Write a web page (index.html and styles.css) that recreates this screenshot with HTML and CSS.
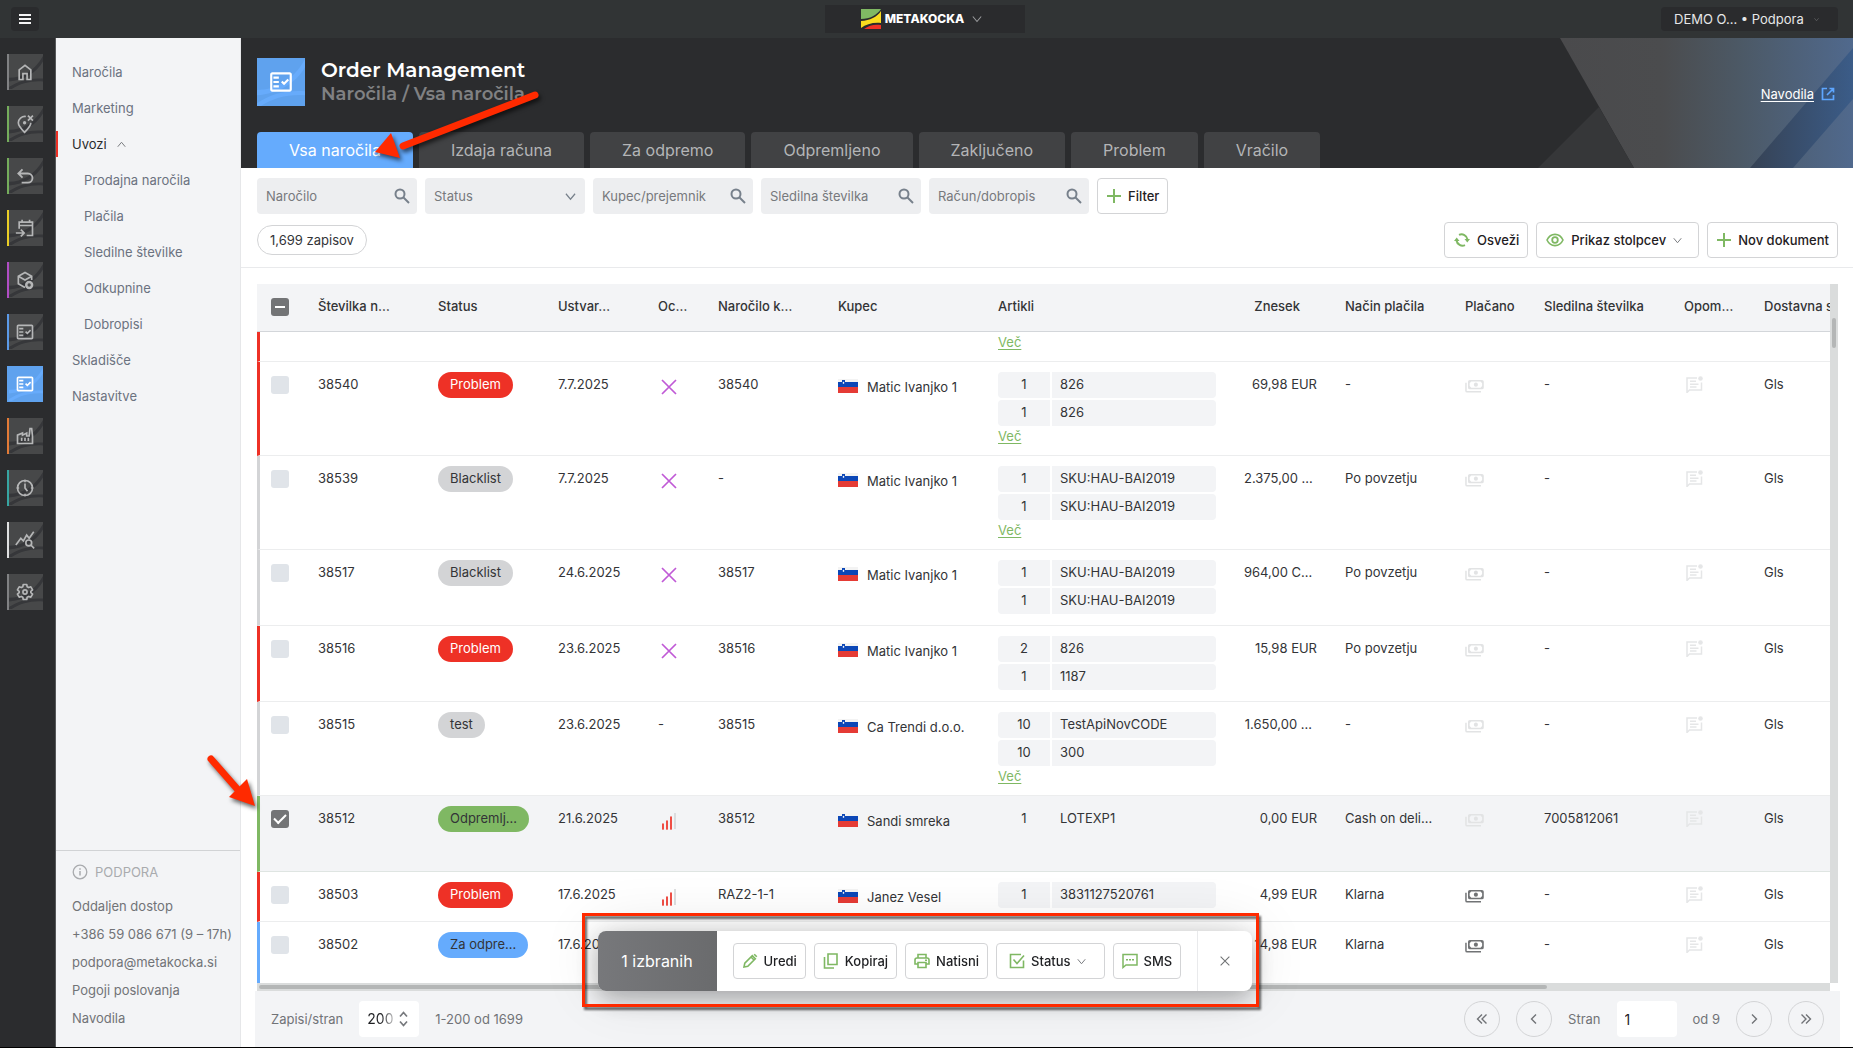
FILE: index.html
```html
<!DOCTYPE html>
<html lang="sl">
<head>
<meta charset="utf-8">
<title>Order Management</title>
<link rel="stylesheet" href="styles.css">
</head>
<body>
<svg class="sprite" aria-hidden="true">
  <symbol id="waves" viewBox="0 0 36 36"><path d="M0 24C14 24 27 17 36 1V7C29 19 16 27 0 28Z"/><path d="M0 34C10 27 22 24 36 25V28C24 27 12 30 3 36H0Z"/></symbol>
  <symbol id="i-home" viewBox="0 0 24 24"><path d="M5 21V9.500L12 4l7 5.500V21h-4.500v-7h-5v7z" fill="none" stroke="currentColor" stroke-width="2"/></symbol>
  <symbol id="i-pin" viewBox="0 0 24 24"><path d="M13 3C8 2.500 4 6 4 10.500c0 4 3.500 7.500 7.500 11.500 4-4 7.500-7.500 7.500-11.500" fill="none" stroke="currentColor" stroke-width="2"/><circle cx="11.500" cy="10.500" r="2"/><path d="M15.500 2l6 6m0-6l-6 6" stroke="currentColor" stroke-width="2"/></symbol>
  <symbol id="i-undo" viewBox="0 0 24 24"><path d="M8 20h7.500a5 5 0 0 0 0-11H5M9 4L4 9l5 5" fill="none" stroke="currentColor" stroke-width="2.200"/></symbol>
  <symbol id="i-cal" viewBox="0 0 24 24"><path d="M5 13V5h16v16h-7M5 9h16M8.500 2v4M17.500 2v4M1 18h9M7 14l4 4-4 4" fill="none" stroke="currentColor" stroke-width="2"/></symbol>
  <symbol id="i-box" viewBox="0 0 24 24"><path d="M12 21l-8-4.500V7.500L12 3l8 4.500V12M4 7.500l8 4.500 8-4.500" fill="none" stroke="currentColor" stroke-width="2"/><circle cx="17" cy="18" r="3.500" fill="none" stroke="currentColor" stroke-width="3"/></symbol>
  <symbol id="i-fact" viewBox="0 0 24 24"><path d="M20 3H4c-1.100 0-2 .9-2 2v14c0 1.100.9 2 2 2h16c1.100 0 2-.9 2-2V5c0-1.100-.9-2-2-2zm0 16H4V5h16z"/><path d="M19.410 10.420L17.990 9l-3.170 3.170-1.410-1.420L12 12.160 14.820 15zM5 7h5v2H5zM5 11h5v2H5zM5 15h5v2H5z"/></symbol>
  <symbol id="i-factory" viewBox="0 0 24 24"><path d="M3 21V11l6-2.500V11l5-2.500V12h3l1-9h2l1 9v9z" fill="none" stroke="currentColor" stroke-width="2"/><path d="M7 14h2v4H7zM11 14h2v4h-2zM15 14h2v4h-2z"/></symbol>
  <symbol id="i-clock" viewBox="0 0 24 24"><circle cx="12" cy="12" r="9" fill="none" stroke="currentColor" stroke-width="2"/><path d="M12 6.500V12l3 4M12 2v3M12 19v3M2 12h3M19 12h3" fill="none" stroke="currentColor" stroke-width="2"/></symbol>
  <symbol id="i-chart" viewBox="0 0 24 24"><path d="M1 18l6-8 3 3 4-7 3 4 5.500-8M19 18l4 4" fill="none" stroke="currentColor" stroke-width="2"/><circle cx="16.500" cy="15.500" r="3.500" fill="none" stroke="currentColor" stroke-width="2"/></symbol>
  <symbol id="i-gear" viewBox="0 0 24 24"><path d="M9.900 3h4.200l.5 2.700 1.800 1 2.600-.9 2.100 3.600-2.100 1.800v1.600l2.100 1.800-2.100 3.600-2.600-.9-1.800 1-.5 2.700H9.900l-.5-2.700-1.800-1-2.600.9-2.100-3.600L5 12.800v-1.600L2.900 9.400 5 5.800l2.600.9 1.800-1z" fill="none" stroke="currentColor" stroke-width="2" stroke-linejoin="round"/><circle cx="12" cy="12" r="2.500" fill="none" stroke="currentColor" stroke-width="2"/></symbol>
  <symbol id="i-down" viewBox="0 0 12 12"><path d="M1 3l5 6 5-6" fill="none" stroke="currentColor" stroke-width="1.300"/></symbol>
  <symbol id="i-up" viewBox="0 0 12 12"><path d="M1 9l5-6 5 6" fill="none" stroke="currentColor" stroke-width="1.300"/></symbol>
  <symbol id="i-search" viewBox="0 0 16 16"><circle cx="6" cy="6" r="4.500" fill="none" stroke="currentColor" stroke-width="2"/><path d="M9.500 9.500L15 15" stroke="currentColor" stroke-width="2"/></symbol>
  <symbol id="i-plus" viewBox="0 0 14 14"><path d="M7 0v14M0 7h14" stroke="currentColor" stroke-width="2"/></symbol>
  <symbol id="i-refresh" viewBox="0 0 16 16"><path d="M5 2.900A6 6 0 0 1 13.500 7.500M11 13.100A6 6 0 0 1 2.500 8.500" fill="none" stroke="currentColor" stroke-width="1.900"/><path d="M10.500 7h5.500l-2.700 3.500zM0 9h5.500L2.700 5.500z"/></symbol>
  <symbol id="i-eye" viewBox="0 0 18 14"><path d="M1 7c3.500-7.500 12.500-7.500 16 0-3.500 7.500-12.500 7.500-16 0z" fill="none" stroke="currentColor" stroke-width="1.600"/><circle cx="9" cy="7" r="2.800" fill="none" stroke="currentColor" stroke-width="1.800"/></symbol>
  <symbol id="i-out" viewBox="0 0 14 14"><path d="M6 1.500H1.500v11h11V8M8.500 1.500h4V5.500M12.500 1.500L6 8" fill="none" stroke="currentColor" stroke-width="1.700"/></symbol>
  <symbol id="i-info" viewBox="0 0 16 16"><circle cx="8" cy="8" r="6.800" fill="none" stroke="currentColor" stroke-width="1.300"/><path d="M8 7v4.500M8 4.300v1.500" stroke="currentColor" stroke-width="1.500"/></symbol>
  <symbol id="i-x" viewBox="0 0 16 16"><path d="M1 1l14 14M15 1L1 15" stroke="currentColor" stroke-width="1.700"/></symbol>
  <symbol id="i-bars" viewBox="0 0 14 18"><path d="M1 12v5M5 9v8M9 5v12" stroke="#ee3126" stroke-width="1.700" stroke-linecap="round"/><path d="M13 1v16" stroke="#d3d4d6" stroke-width="1.500"/></symbol>
  <symbol id="i-flag" viewBox="0 0 20 14"><path d="M0 0h20v4H0z" fill="#f3f3f3"/><path d="M0 3h20v5H0z" fill="#0c47b7"/><path d="M0 8h20v6H0z" fill="#e53b35"/><path d="M4 1h3v3L5.500 6 4 4z" fill="#0c47b7"/><path d="M4.500 4l1-1.500 1 1.500-1 1z" fill="#fff"/></symbol>
  <symbol id="i-cash" viewBox="0 0 20 14"><path d="M5 0h13a2 2 0 0 1 2 2v6a2 2 0 0 1-2 2H5a2 2 0 0 1-2-2V2a2 2 0 0 1 2-2zm1.500 1.700L4.800 3.500v3L6.500 8.300h10l1.700-1.800v-3l-1.700-1.800z" fill-rule="evenodd"/><circle cx="11.500" cy="5" r="2.200"/><path d="M.8 3v8.500q0 1.200 1.200 1.200h15" fill="none" stroke="currentColor" stroke-width="1.600"/></symbol>
  <symbol id="i-note" viewBox="0 0 17 17"><path d="M11 2H1v14.500L3.500 14H15.500V6.500" fill="none" stroke="currentColor" stroke-width="1.500"/><path d="M4 5.200h6M4 8.200h8.500M4 11h6.500" stroke="currentColor" stroke-width="1.400"/><circle cx="14.500" cy="2.500" r="2.300"/></symbol>
  <symbol id="i-pen" viewBox="0 0 16 16"><path d="M2 14l.8-3.800 7.500-7.500 3 3-7.500 7.500zM9 4l3 3M12.200 1.200l2.600 2.600" fill="none" stroke="currentColor" stroke-width="1.600"/></symbol>
  <symbol id="i-copy" viewBox="0 0 16 16"><path d="M5 1h9v10.500H5zM1.500 4v11H11" fill="none" stroke="currentColor" stroke-width="1.600"/></symbol>
  <symbol id="i-print" viewBox="0 0 16 16"><path d="M4 5V1.500h8V5M4 11H1V7q0-2 2-2h10q2 0 2 2v4h-3M4 9.500h8v5H4z" fill="none" stroke="currentColor" stroke-width="1.600"/><path d="M11 6.500h2V8h-2z"/></symbol>
  <symbol id="i-check" viewBox="0 0 16 16"><path d="M14.500 7.500v7h-13v-13H12M4.500 6.500l3.500 4 7-8" fill="none" stroke="currentColor" stroke-width="1.600"/></symbol>
  <symbol id="i-sms" viewBox="0 0 16 16"><path d="M1 1.500h14v10.500H4L1 14.500z" fill="none" stroke="currentColor" stroke-width="1.500"/><path d="M4 6h2v1.500H4zM7 6h2v1.500H7zM10 6h2v1.500h-2z"/></symbol>
  <symbol id="i-next" viewBox="0 0 12 12"><path d="M4 1.500L8.500 6 4 10.500" fill="none" stroke="currentColor" stroke-width="1.400"/></symbol>
  <symbol id="i-last" viewBox="0 0 12 12"><path d="M1.500 1.500L6 6l-4.500 4.500M6 1.500L10.500 6 6 10.500" fill="none" stroke="currentColor" stroke-width="1.400"/></symbol>
</svg>

<div class="app">
  <header class="topbar">
    <button class="menu-btn" aria-label="Meni"><i></i><i></i><i></i></button>
    <button class="brand">
      <svg width="20" height="20" viewBox="0 0 20 20"><path d="M0 0h20C16 6 9 10 0 10z" fill="#7fb863"/><path d="M0 12C9 11.500 16 8 20 2v12C13 13 5 15 0 19z" fill="#fadc1f"/><path d="M3 20c5-4 11-5 17-4v4z" fill="#ee3126"/></svg>
      METAKOCKA
      <svg class="chev" width="10" height="10"><use href="#i-down"/></svg>
    </button>
    <button class="user">DEMO O… • Podpora <svg class="chev" width="5" height="5"><use href="#i-down"/></svg></button>
  </header>

  <nav class="rail" aria-label="Moduli">
    <a href="#" class="tile c-gray" aria-label="Domov"><svg class="waves"><use href="#waves"/></svg><svg class="ico"><use href="#i-home"/></svg></a>
    <a href="#" class="tile c-green" aria-label="Lokacije"><svg class="waves"><use href="#waves"/></svg><svg class="ico"><use href="#i-pin"/></svg></a>
    <a href="#" class="tile c-green" aria-label="Vračila"><svg class="waves"><use href="#waves"/></svg><svg class="ico"><use href="#i-undo"/></svg></a>
    <a href="#" class="tile c-yellow" aria-label="Koledar"><svg class="waves"><use href="#waves"/></svg><svg class="ico"><use href="#i-cal"/></svg></a>
    <a href="#" class="tile c-purple" aria-label="Paketi"><svg class="waves"><use href="#waves"/></svg><svg class="ico"><use href="#i-box"/></svg></a>
    <a href="#" class="tile c-blue" aria-label="Seznam"><svg class="waves"><use href="#waves"/></svg><svg class="ico"><use href="#i-fact"/></svg></a>
    <a href="#" class="tile active" aria-label="Naročila"><svg class="waves"><use href="#waves"/></svg><svg class="ico"><use href="#i-fact"/></svg></a>
    <a href="#" class="tile c-orange" aria-label="Proizvodnja"><svg class="waves"><use href="#waves"/></svg><svg class="ico"><use href="#i-factory"/></svg></a>
    <a href="#" class="tile c-teal" aria-label="Čas"><svg class="waves"><use href="#waves"/></svg><svg class="ico"><use href="#i-clock"/></svg></a>
    <a href="#" class="tile c-white" aria-label="Analitika"><svg class="waves"><use href="#waves"/></svg><svg class="ico"><use href="#i-chart"/></svg></a>
    <a href="#" class="tile c-gray" aria-label="Nastavitve"><svg class="waves"><use href="#waves"/></svg><svg class="ico"><use href="#i-gear"/></svg></a>
  </nav>

  <aside class="side">
    <nav class="side-nav">
      <a href="#">Naročila</a>
      <a href="#">Marketing</a>
      <a href="#" class="open">Uvozi <svg class="chev" width="9" height="9"><use href="#i-up"/></svg></a>
      <a href="#" class="sub">Prodajna naročila</a>
      <a href="#" class="sub">Plačila</a>
      <a href="#" class="sub">Sledilne številke</a>
      <a href="#" class="sub">Odkupnine</a>
      <a href="#" class="sub">Dobropisi</a>
      <a href="#">Skladišče</a>
      <a href="#">Nastavitve</a>
    </nav>
    <div class="support">
      <h2><svg width="16" height="16"><use href="#i-info"/></svg>PODPORA</h2>
      <a href="#">Oddaljen dostop</a>
      <a href="#">+386 59 086 671 (9 – 17h)</a>
      <a href="#">podpora@metakocka.si</a>
      <a href="#">Pogoji poslovanja</a>
      <a href="#">Navodila</a>
    </div>
  </aside>

  <main class="main">
    <div class="hero">
      <svg class="art" width="320" height="130" viewBox="0 0 320 130" aria-hidden="true">
        <defs>
          <linearGradient id="g1"><stop offset="0" stop-color="#4a4a4c"/><stop offset=".35" stop-color="#4b4c4e"/><stop offset=".62" stop-color="#4c5966"/><stop offset="1" stop-color="#50698d"/></linearGradient>
          <linearGradient id="g2"><stop offset="0" stop-color="#364254"/><stop offset="1" stop-color="#3b5c88"/></linearGradient>
        </defs>
        <path d="M27 0H320V130H101z" fill="url(#g1)"/>
        <path d="M66 69L5 130H101z" fill="#363739"/>
        <path d="M320 10L217 130H260L320 61z" fill="url(#g2)"/>
      </svg>
      <div class="hero-head">
        <span class="hero-icon"><svg class="waves"><use href="#waves"/></svg><svg class="ico"><use href="#i-fact"/></svg></span>
        <div class="titles"><h1>Order Management</h1><p>Naročila / Vsa naročila</p></div>
        <a class="help" href="#"><span>Navodila</span><svg width="14" height="14"><use href="#i-out"/></svg></a>
      </div>
      <div class="tabs">
        <button class="tab on">Vsa naročila</button>
        <button class="tab">Izdaja računa</button>
        <button class="tab">Za odpremo</button>
        <button class="tab">Odpremljeno</button>
        <button class="tab">Zaključeno</button>
        <button class="tab">Problem</button>
        <button class="tab">Vračilo</button>
      </div>
    </div>

    <div class="filters">
      <label class="field"><input type="text" placeholder="Naročilo" aria-label="Naročilo"><svg width="16" height="16"><use href="#i-search"/></svg></label>
      <label class="field"><select aria-label="Status"><option>Status</option></select><svg width="11" height="11"><use href="#i-down"/></svg></label>
      <label class="field"><input type="text" placeholder="Kupec/prejemnik" aria-label="Kupec/prejemnik"><svg width="16" height="16"><use href="#i-search"/></svg></label>
      <label class="field"><input type="text" placeholder="Sledilna številka" aria-label="Sledilna številka"><svg width="16" height="16"><use href="#i-search"/></svg></label>
      <label class="field"><input type="text" placeholder="Račun/dobropis" aria-label="Račun/dobropis"><svg width="16" height="16"><use href="#i-search"/></svg></label>
      <button class="btn"><svg width="14" height="14"><use href="#i-plus"/></svg>Filter</button>
    </div>
    <div class="actions">
      <span class="count">1,699 zapisov</span>
      <button class="btn"><svg width="16" height="16"><use href="#i-refresh"/></svg>Osveži</button>
      <button class="btn wide"><svg width="18" height="14"><use href="#i-eye"/></svg>Prikaz stolpcev<svg class="chev" width="9" height="9"><use href="#i-down"/></svg></button>
      <button class="btn"><svg width="14" height="14"><use href="#i-plus"/></svg>Nov dokument</button>
    </div>

    <div class="grid-wrap">
      <div class="viewport">
        <table class="orders">
          <colgroup><col class="w45"><col class="w120"><col class="w120"><col class="w100"><col class="w60"><col class="w120"><col class="w160"><col class="w246"><col class="w101"><col class="w120"><col class="w79"><col class="w140"><col class="w80"><col class="w120"></colgroup>
          <thead>
            <tr><th class="sel"><input type="checkbox" class="partial" aria-label="Izberi vse"></th><th>Številka n…</th><th>Status</th><th>Ustvar…</th><th>Oc…</th><th>Naročilo k…</th><th>Kupec</th><th>Artikli</th><th class="amount">Znesek</th><th>Način plačila</th><th>Plačano</th><th>Sledilna številka</th><th>Opom…</th><th>Dostavna služba</th></tr>
          </thead>
          <tbody>
            <tr class="r-red h30"><td class="sel"></td><td></td><td></td><td></td><td></td><td></td><td></td><td class="items"><a href="#" class="more">Več</a></td><td></td><td></td><td></td><td></td><td></td><td></td></tr>
            <tr class="r-red h94"><td class="sel"><input type="checkbox" aria-label="38540"></td><td>38540</td><td><span class="pill red">Problem</span></td><td>7.7.2025</td><td class="rate"><svg class="x"><use href="#i-x"/></svg></td><td>38540</td><td><div class="buyer"><svg><use href="#i-flag"/></svg>Matic Ivanjko 1</div></td><td class="items"><div class="item"><b>1</b><span>826</span></div><div class="item"><b>1</b><span>826</span></div><a href="#" class="more">Več</a></td><td class="amount">69,98 EUR</td><td>-</td><td><svg class="cash"><use href="#i-cash"/></svg></td><td>-</td><td><svg class="note"><use href="#i-note"/></svg></td><td>Gls</td></tr>
            <tr class="r-gray h94"><td class="sel"><input type="checkbox" aria-label="38539"></td><td>38539</td><td><span class="pill">Blacklist</span></td><td>7.7.2025</td><td class="rate"><svg class="x"><use href="#i-x"/></svg></td><td>-</td><td><div class="buyer"><svg><use href="#i-flag"/></svg>Matic Ivanjko 1</div></td><td class="items"><div class="item"><b>1</b><span>SKU:HAU-BAI2019</span></div><div class="item"><b>1</b><span>SKU:HAU-BAI2019</span></div><a href="#" class="more">Več</a></td><td class="amount cut">2.375,00 …</td><td>Po povzetju</td><td><svg class="cash"><use href="#i-cash"/></svg></td><td>-</td><td><svg class="note"><use href="#i-note"/></svg></td><td>Gls</td></tr>
            <tr class="r-gray h76"><td class="sel"><input type="checkbox" aria-label="38517"></td><td>38517</td><td><span class="pill">Blacklist</span></td><td>24.6.2025</td><td class="rate"><svg class="x"><use href="#i-x"/></svg></td><td>38517</td><td><div class="buyer"><svg><use href="#i-flag"/></svg>Matic Ivanjko 1</div></td><td class="items"><div class="item"><b>1</b><span>SKU:HAU-BAI2019</span></div><div class="item"><b>1</b><span>SKU:HAU-BAI2019</span></div></td><td class="amount cut">964,00 C…</td><td>Po povzetju</td><td><svg class="cash"><use href="#i-cash"/></svg></td><td>-</td><td><svg class="note"><use href="#i-note"/></svg></td><td>Gls</td></tr>
            <tr class="r-red h76"><td class="sel"><input type="checkbox" aria-label="38516"></td><td>38516</td><td><span class="pill red">Problem</span></td><td>23.6.2025</td><td class="rate"><svg class="x"><use href="#i-x"/></svg></td><td>38516</td><td><div class="buyer"><svg><use href="#i-flag"/></svg>Matic Ivanjko 1</div></td><td class="items"><div class="item"><b>2</b><span>826</span></div><div class="item"><b>1</b><span>1187</span></div></td><td class="amount">15,98 EUR</td><td>Po povzetju</td><td><svg class="cash"><use href="#i-cash"/></svg></td><td>-</td><td><svg class="note"><use href="#i-note"/></svg></td><td>Gls</td></tr>
            <tr class="r-gray h94"><td class="sel"><input type="checkbox" aria-label="38515"></td><td>38515</td><td><span class="pill">test</span></td><td>23.6.2025</td><td>-</td><td>38515</td><td><div class="buyer"><svg><use href="#i-flag"/></svg>Ca Trendi d.o.o.</div></td><td class="items"><div class="item"><b>10</b><span>TestApiNovCODE</span></div><div class="item"><b>10</b><span>300</span></div><a href="#" class="more">Več</a></td><td class="amount cut">1.650,00 …</td><td>-</td><td><svg class="cash"><use href="#i-cash"/></svg></td><td>-</td><td><svg class="note"><use href="#i-note"/></svg></td><td>Gls</td></tr>
            <tr class="r-green h76 picked"><td class="sel"><input type="checkbox" aria-label="38512" checked></td><td>38512</td><td><span class="pill green">Odpremlj…</span></td><td>21.6.2025</td><td class="rate"><svg class="bars"><use href="#i-bars"/></svg></td><td>38512</td><td><div class="buyer"><svg><use href="#i-flag"/></svg>Sandi smreka</div></td><td class="items"><div class="item"><b>1</b><span>LOTEXP1</span></div></td><td class="amount">0,00 EUR</td><td>Cash on deli…</td><td><svg class="cash"><use href="#i-cash"/></svg></td><td>7005812061</td><td><svg class="note"><use href="#i-note"/></svg></td><td>Gls</td></tr>
            <tr class="r-red h50"><td class="sel"><input type="checkbox" aria-label="38503"></td><td>38503</td><td><span class="pill red">Problem</span></td><td>17.6.2025</td><td class="rate"><svg class="bars"><use href="#i-bars"/></svg></td><td>RAZ2-1-1</td><td><div class="buyer"><svg><use href="#i-flag"/></svg>Janez Vesel</div></td><td class="items"><div class="item"><b>1</b><span>3831127520761</span></div></td><td class="amount">4,99 EUR</td><td>Klarna</td><td><svg class="cash paid"><use href="#i-cash"/></svg></td><td>-</td><td><svg class="note"><use href="#i-note"/></svg></td><td>Gls</td></tr>
            <tr class="r-blue h76"><td class="sel"><input type="checkbox" aria-label="38502"></td><td>38502</td><td><span class="pill blue">Za odpre…</span></td><td>17.6.2025</td><td></td><td></td><td></td><td></td><td class="amount">14,98 EUR</td><td>Klarna</td><td><svg class="cash paid"><use href="#i-cash"/></svg></td><td>-</td><td><svg class="note"><use href="#i-note"/></svg></td><td>Gls</td></tr>
          </tbody>
        </table>
      </div>
      <div class="vbar"><span></span></div>
      <div class="hbar"><span></span></div>
    </div>

    <footer class="pager">
      <label for="per">Zapisi/stran</label>
      <div class="stepper"><input id="per" type="text" value="200"><svg width="9" height="16" viewBox="0 0 9 16"><path d="M1 5.500l3.500-4 3.500 4M1 10.500l3.500 4 3.500-4" fill="none" stroke="#77797d" stroke-width="1.700"/></svg></div>
      <span>1-200 od 1699</span>
      <div class="pages">
        <button class="round" aria-label="Prva"><svg class="flip"><use href="#i-last"/></svg></button>
        <button class="round" aria-label="Prejšnja"><svg class="flip"><use href="#i-next"/></svg></button>
        <label for="page">Stran</label>
        <input id="page" class="page" type="text" value="1">
        <span>od 9</span>
        <button class="round" aria-label="Naslednja"><svg><use href="#i-next"/></svg></button>
        <button class="round" aria-label="Zadnja"><svg><use href="#i-last"/></svg></button>
      </div>
    </footer>
  </main>
</div>

<div class="bulk">
  <div class="picked-count">1 izbranih</div>
  <div class="bulk-actions">
    <button class="btn"><svg width="16" height="16"><use href="#i-pen"/></svg>Uredi</button>
    <button class="btn"><svg width="16" height="16"><use href="#i-copy"/></svg>Kopiraj</button>
    <button class="btn"><svg width="16" height="16"><use href="#i-print"/></svg>Natisni</button>
    <button class="btn wide"><svg width="16" height="16"><use href="#i-check"/></svg>Status<svg class="chev" width="9" height="9"><use href="#i-down"/></svg></button>
    <button class="btn"><svg width="16" height="16"><use href="#i-sms"/></svg>SMS</button>
  </div>
  <button class="close" aria-label="Zapri"><svg width="10" height="10"><use href="#i-x"/></svg></button>
</div>

<div class="mark-box"></div>
<svg class="arrow arrow-tab" width="180" height="80" viewBox="0 0 180 80" aria-hidden="true"><path d="M165 13L33 64" stroke="#ff2a00" stroke-width="7" stroke-linecap="round"/><path d="M5 70L21 51L30 76z" fill="#ff2a00"/></svg>
<svg class="arrow arrow-row" width="70" height="70" viewBox="0 0 70 70" aria-hidden="true"><path d="M11 9L39 41" stroke="#ff2a00" stroke-width="7" stroke-linecap="round"/><path d="M55 56L47 29L29 47z" fill="#ff2a00"/></svg>
</body>
</html>
```
FILE: styles.css
```css
* { box-sizing: border-box; }
body {
  margin: 0;
  background: #000;
  color: #333437;
  font: 13px/20px Inter, "Liberation Sans", sans-serif;
}
button, input, select { font: inherit; color: inherit; margin: 0; padding: 0; border: 0; background: none; }
a { color: inherit; text-decoration: none; }
h1, h2, p { margin: 0; }
svg { display: block; fill: currentColor; flex: none; }
.sprite { position: absolute; width: 0; height: 0; }

.app {
  display: grid;
  grid-template: 38px minmax(0, 1fr) / 56px 185px minmax(0, 1fr);
  height: 100vh;
  border-bottom: 1px solid #000;
}

/* top bar */
.topbar {
  grid-column: 1 / -1;
  display: grid;
  grid-template-columns: 1fr 200px 1fr;
  align-items: center;
  padding: 0 15px 0 11px;
  background: #313435;
  color: #e6e7e8;
}
.topbar button { background: #2a2b2d; }
.menu-btn {
  display: flex;
  flex-direction: column;
  align-items: center;
  justify-content: center;
  gap: 2px;
  width: 28px;
  height: 24px;
  border-radius: 4px;
}
.menu-btn i { width: 12px; height: 2px; background: #f4f4f5; }
.brand {
  display: flex;
  align-items: center;
  justify-content: center;
  gap: 4px;
  height: 28px;
  padding-right: 6px;
  font-size: 12px;
  font-weight: 800;
  color: #fff;
}
.brand .chev { margin-left: 4px; color: #9a9b9d; }
.user {
  justify-self: end;
  display: flex;
  align-items: center;
  gap: 10px;
  width: 177px;
  height: 24px;
  padding-left: 13px;
  border-radius: 4px;
}
.user .chev { color: #77797b; }

/* module rail */
.rail {
  display: flex;
  flex-direction: column;
  gap: 16px;
  padding: 16px 0 0 7px;
  background: #2b2c2e;
  border-right: 1px solid #56585a;
}
.tile {
  position: relative;
  display: flex;
  align-items: center;
  justify-content: center;
  width: 36px;
  height: 36px;
  padding-right: 2px;
  background: #474849;
  border-left: 2px solid #808183;
  color: #b5b6b7;
}
.waves { position: absolute; inset: 0; width: 100%; height: 100%; fill: #36373a; }
.ico { position: relative; width: 20px; height: 20px; }
.c-green { border-color: #75ad5c; }
.c-yellow { border-color: #eace25; }
.c-purple { border-color: #b04dc4; }
.c-blue { border-color: #5b9ae8; }
.c-orange { border-color: #e37b37; }
.c-teal { border-color: #37a5a2; }
.c-white { border-color: #dfe0e1; }
.tile.active, .hero-icon { background: #5fa2ee; color: #fff; }
.tile.active { border-color: #5fa2ee; }
.active .waves, .hero-icon .waves { fill: #67abfb; }

/* sidebar */
.side {
  display: flex;
  flex-direction: column;
  justify-content: space-between;
  background: #f3f4f6;
  border-right: 1px solid #e6e7e9;
}
.side-nav { padding-top: 21px; color: #6b7280; }
.side-nav a {
  display: flex;
  align-items: center;
  gap: 10px;
  height: 26px;
  margin-bottom: 10px;
  padding-left: 16px;
}
.side-nav .sub { padding-left: 28px; }
.side-nav .open { border-left: 2px solid #ee3126; padding-left: 14px; color: #2a2b2d; }
.side-nav .chev { color: #77797d; }
.support {
  display: flex;
  flex-direction: column;
  gap: 8px;
  padding: 11px 0 19px 16px;
  border-top: 1px solid #d1d3d5;
  color: #717377;
  white-space: nowrap;
}
.support h2 {
  display: flex;
  align-items: center;
  gap: 7px;
  margin-bottom: 6px;
  font: inherit;
  color: #a9abae;
}

/* main */
.main { display: flex; flex-direction: column; min-width: 0; background: #fff; }
.hero {
  position: relative;
  display: flex;
  flex-direction: column;
  justify-content: space-between;
  height: 130px;
  padding: 20px 15px 0 16px;
  background: #2b2c2e;
}
.art { position: absolute; right: 0; top: 0; }
.hero-head { position: relative; display: flex; align-items: center; gap: 16px; }
.hero-icon {
  position: relative;
  display: flex;
  align-items: center;
  justify-content: center;
  width: 48px;
  height: 48px;
}
.hero-icon .ico { width: 26px; height: 26px; }
.titles { font-family: Montserrat, Inter, sans-serif; font-weight: 600; line-height: 24px; }
h1 { font-size: 20px; line-height: 24px; font-weight: 600; color: #fff; }
.titles p { font-size: 18px; color: #808183; }
.help { display: flex; gap: 7px; align-items: center; margin: 24px 3px 0 auto; color: #fff; }
.help span { text-decoration: underline; text-underline-offset: 2px; }
.help svg { color: #5ea6ff; }
.tabs { display: flex; gap: 6px; }
.tab {
  height: 36px;
  padding: 0 32px;
  border-radius: 4px 4px 0 0;
  background: #414244;
  color: #b4b5b7;
  font-size: 16px;
}
.tab.on { background: #65abfd; color: #fff; }

.filters { display: flex; gap: 8px; padding: 10px 16px 8px; }
.field {
  display: flex;
  align-items: center;
  width: 160px;
  height: 36px;
  padding: 0 7px 0 9px;
  border-radius: 4px;
  background: #edeef0;
  color: #77797d;
}
.field input, .field select { flex: 1; min-width: 0; appearance: none; outline: 0; }
.field input::placeholder { color: #77797d; opacity: 1; }
.field svg { color: #77808b; }
.field select + svg { margin-right: 2px; }
.btn {
  display: flex;
  align-items: center;
  gap: 7px;
  height: 36px;
  padding: 0 8px 0 9px;
  border: 1px solid #d3d4d6;
  border-radius: 4px;
  background: #fff;
  color: #1f2023;
  font-weight: 500;
  white-space: nowrap;
}
.btn svg { color: #7fb863; }
.btn .chev { color: #77797d; }
.btn.wide { padding: 0 16px 0 9px; }
.actions {
  display: flex;
  align-items: center;
  gap: 8px;
  padding: 0 15px 9px 16px;
  border-bottom: 1px solid #e9eaec;
}
.count {
  margin-right: auto;
  padding: 4px 12px;
  border: 1px solid #d3d4d6;
  border-radius: 15px;
}

/* table */
.grid-wrap {
  flex: 1;
  min-height: 0;
  display: grid;
  grid-template: minmax(0, 1fr) 8px / minmax(0, 1fr) 8px;
  margin: 16px 15px 0 16px;
}
.viewport { overflow: hidden; }
.vbar { display: flex; justify-content: center; padding-top: 34px; background: #dadcdc; }
.vbar span { width: 4px; height: 30px; border-radius: 2px; background: #b4b6b6; }
.hbar { display: flex; align-items: center; padding-left: 2px; background: #dadcdc; }
.hbar span { width: 82%; height: 4px; border-radius: 2px; background: #b4b6b6; }
.orders { width: 1611px; table-layout: fixed; border-collapse: separate; border-spacing: 0; }
.w45 { width: 45px; } .w60 { width: 60px; } .w79 { width: 79px; } .w80 { width: 80px; }
.w100 { width: 100px; } .w101 { width: 101px; } .w120 { width: 120px; } .w140 { width: 140px; }
.w160 { width: 160px; } .w246 { width: 246px; }
.orders th {
  height: 48px;
  padding: 0 0 4px 16px;
  background: #f3f4f6;
  border-bottom: 1px solid #d3d6da;
  font-weight: 500;
  text-align: left;
  white-space: nowrap;
}
.orders td {
  padding: 12px 0 0 16px;
  border-bottom: 1px solid #ecedee;
  vertical-align: top;
  white-space: nowrap;
}
.orders th.amount { padding-right: 29px; text-align: right; }
.orders td.amount { padding-right: 12px; text-align: right; }
.orders td.amount.cut { padding-right: 17px; }
.orders th.sel { padding: 0 0 2px 14px; }
.orders td.sel { padding: 14px 0 0 11px; }
.orders td.sel { border-left: 3px solid #d3d4d6; }
.h30 td { height: 30px; } .h50 td { height: 50px; } .h76 td { height: 76px; } .h94 td { height: 94px; }
.orders .r-red .sel { border-left-color: #ee3126; }
.orders .r-green .sel { border-left-color: #7fb863; }
.orders .r-blue .sel { border-left-color: #65abfd; }
.picked td { background: #f3f4f6; border-bottom-color: #dfe5e2; }
.sel input {
  display: flex;
  align-items: center;
  justify-content: center;
  appearance: none;
  width: 18px;
  height: 18px;
  border-radius: 3px;
  background: #e0e4e9;
}
.sel .partial, .sel input:checked { background: #737476; }
.sel .partial::before { content: ""; width: 10px; height: 2px; background: #fff; }
.sel input:checked::before {
  content: "";
  width: 10px;
  height: 5px;
  margin-bottom: 3px;
  border: solid #fff;
  border-width: 0 0 2px 2px;
  transform: rotate(-45deg);
}
.pill {
  display: inline-block;
  margin-top: -2px;
  padding: 2px 12px 4px;
  border-radius: 13px;
  background: #d3d4d6;
  color: #333437;
}
.pill.red { background: #ee3126; color: #fff; }
.pill.green { background: #7fb863; }
.pill.blue { background: #65abfd; }
.rate svg { margin: 5px 0 0 3px; }
.x { width: 16px; height: 16px; color: #c05ad6; }
.rate .bars { width: 14px; height: 18px; margin: 4px 0 0 4px; }
.buyer { display: flex; align-items: center; gap: 9px; padding-top: 3px; }
.buyer svg { width: 20px; height: 14px; margin-bottom: 2px; }
.orders td.items { padding-top: 10px; }
.item { display: grid; grid-template-columns: 52px 164px; gap: 2px; margin-bottom: 2px; }
.item b, .item span { padding: 2px 8px 4px; background: #f3f4f6; font-weight: 400; }
.item b { text-align: center; border-radius: 4px 0 0 4px; }
.item span { border-radius: 0 4px 4px 0; }
.more { display: block; width: max-content; line-height: 16px; color: #7fb863; text-decoration: underline; text-underline-offset: 2px; }
.orders .h30 .items { padding-top: 2px; }
.cash { width: 19px; height: 13px; margin-top: 6px; color: #e2e3e4; }
.cash.paid { color: #717375; }
.note { width: 17px; height: 17px; margin: 2px 0 0 2px; color: #e5e6e7; }

/* pager */
.pager {
  display: flex;
  align-items: center;
  gap: 16px;
  height: 56px;
  margin: 0 13px 0 14px;
  padding: 0 16px;
  background: #f3f4f6;
  color: #717377;
}
.stepper {
  display: flex;
  align-items: center;
  width: 60px;
  height: 36px;
  padding: 0 11px 0 8px;
  border-radius: 4px;
  background: #fff;
}
.stepper input {
  width: 32px;
  font-size: 14px;
  color: #1f2023;
  mask-image: linear-gradient(90deg, #000 14px, rgba(0, 0, 0, .3) 26px);
}
.page {
  width: 60px;
  height: 36px;
  padding-left: 8px;
  border-radius: 4px;
  background: #fff;
  color: #1f2023;
  font-size: 14px;
}
.pages { display: flex; align-items: center; gap: 16px; margin-left: auto; }
.round {
  display: flex;
  align-items: center;
  justify-content: center;
  width: 36px;
  height: 36px;
  border: 1px solid #d3d4d6;
  border-radius: 50%;
}
.round svg { width: 12px; height: 12px; }
.flip { transform: rotate(180deg); }

/* bulk action bar floating over the table */
.bulk {
  position: fixed;
  left: calc(50% - 329px);
  bottom: 57px;
  display: flex;
  height: 60px;
  border-radius: 8px;
  background: #fff;
  box-shadow: 0 8px 24px rgba(0, 0, 0, .28), 0 0 60px rgba(0, 0, 0, .12);
}
.picked-count {
  display: flex;
  align-items: center;
  justify-content: center;
  width: 119px;
  border-radius: 8px 0 0 8px;
  background: linear-gradient(90deg, #77787b, #6a6b6d);
  color: #fff;
  font-size: 16px;
}
.bulk-actions { display: flex; align-items: center; gap: 8px; padding: 0 16px; border-right: 1px solid #e9eaec; }
.bulk-actions .btn { gap: 6px; padding: 0 8px; }
.bulk-actions .wide { padding: 0 18px 0 12px; }
.close { display: flex; align-items: center; justify-content: center; width: 54px; color: #717375; }

/* annotations */
.mark-box {
  position: fixed;
  left: calc(50% - 345px);
  bottom: 41px;
  width: 677px;
  height: 94px;
  border: 3px solid #ff2a00;
  filter: drop-shadow(2px 3px 1px rgba(0, 0, 0, .6));
  pointer-events: none;
}
.arrow { position: absolute; fill: none; filter: drop-shadow(2px 3px 2px rgba(0, 0, 0, .6)); pointer-events: none; }
.arrow-tab { left: 370px; top: 82px; }
.arrow-row { left: 200px; top: 750px; }
```
